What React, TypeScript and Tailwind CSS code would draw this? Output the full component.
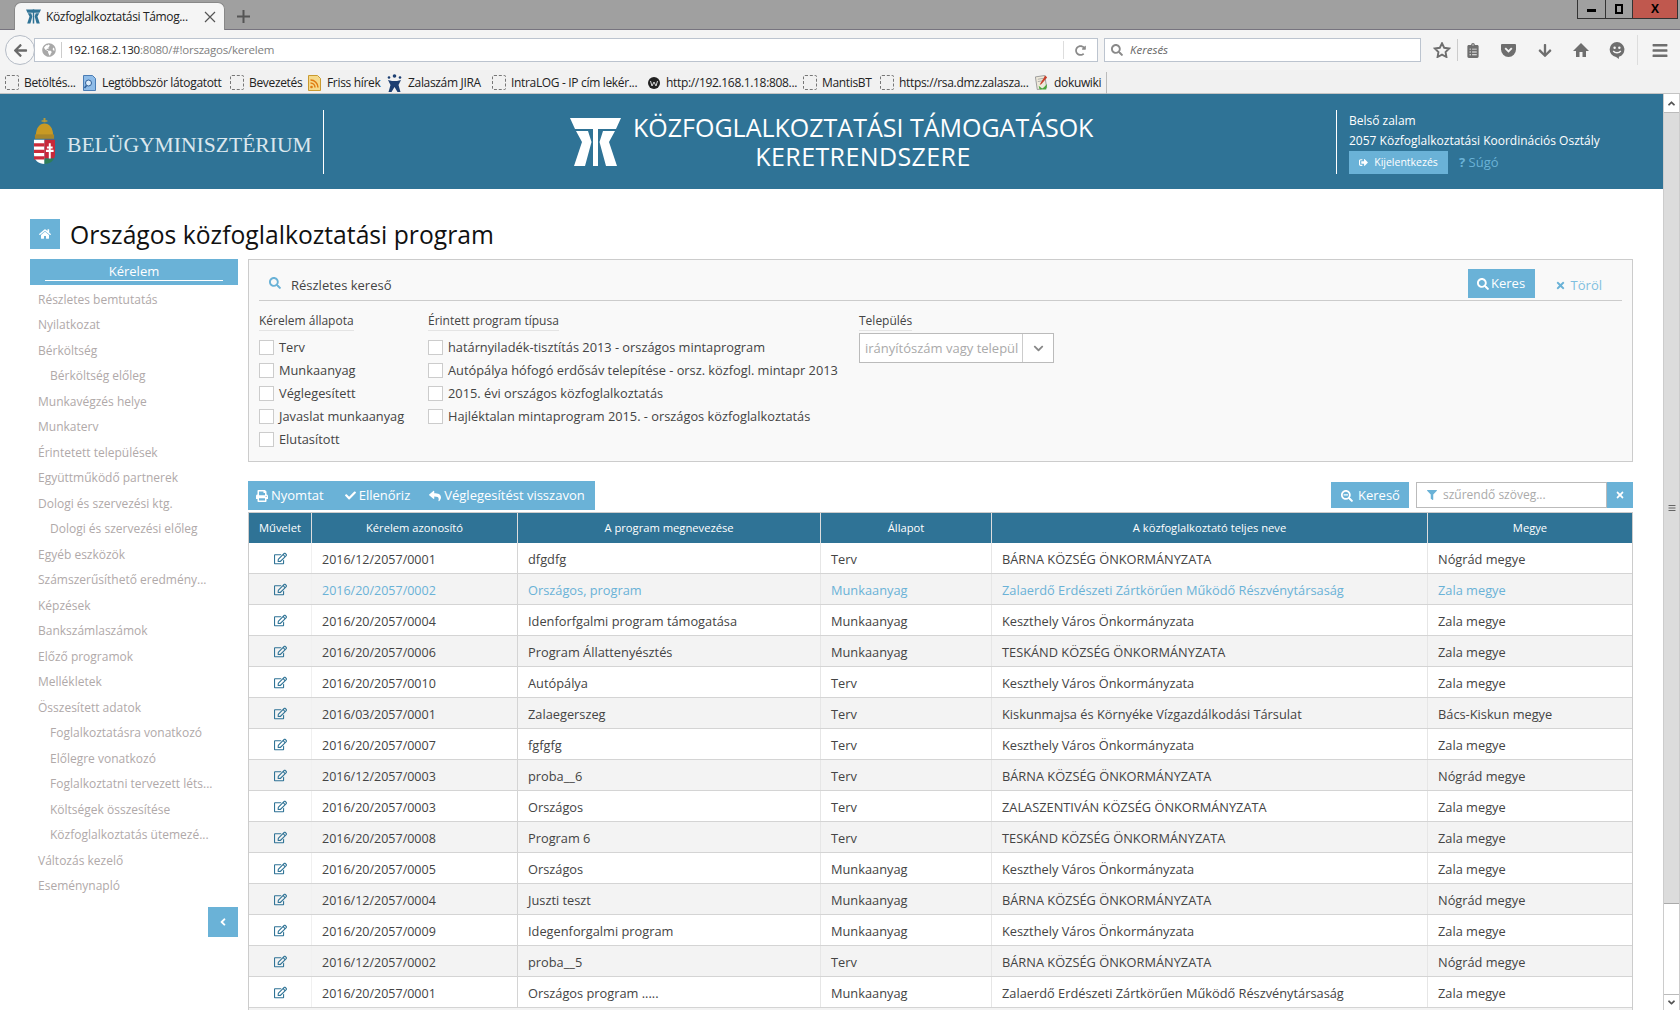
import React from "react";
import {
  FaHome, FaSearch, FaTimes, FaPrint, FaCheck, FaReply, FaFilter, FaSearchMinus, FaRegEdit,
  FaSignOutAlt, FaChevronDown, FaAngleLeft, FaArrowLeft, FaGlobeAmericas, FaRedoAlt,
  FaClipboardList, FaArrowDown, FaBars, FaAngleUp, FaAngleDown,
} from "react-icons/fa";

const sans = "font-['Open_Sans',sans-serif]";

function Logo({ className, color }: { className: string; color: string }) {
  return (
    <svg viewBox="0 0 51 48" className={className} fill={color}>
      <path d="M0 0H51L46 11H5Z" />
      <path d="M23 0H28V48H23Z" />
      <path d="M6 13H18L21.500 24L15 48H4L12 24Z" />
      <path d="M45 13H33L29.500 24L36 48H47L39 24Z" />
    </svg>
  );
}

function Crest() {
  return (
    <svg viewBox="0 0 24 43" preserveAspectRatio="none" className="w-[23px] h-[47px] shrink-0">
      <path d="M11 0h2v4h-2zM9 2h6v1.500H9z" fill="#b79b3a" />
      <path d="M3 16C3 9 7 5 12 5s9 4 9 11z" fill="#c89a24" />
      <rect x="2" y="15" width="20" height="4" fill="#a8862a" />
      <path d="M1 20h11v22c-6 0-11-3-11-9z" fill="#fff" />
      <path d="M1 23h11v3H1zM1 29h11v3H1zM1 35h11v3H1z" fill="#cc2b3a" />
      <path d="M12 20h11v13c0 2-.5 3-1 4H12z" fill="#c8283a" />
      <path d="M12 37h10c-2 3-5 5-10 5z" fill="#2e7d57" />
      <path d="M16.500 23h2v3h2v2h-2v1h3v2h-3v6h-2v-6h-3v-2h3v-1h-2v-2h2z" fill="#fff" />
    </svg>
  );
}

const sidebar: [string, boolean][] = [
  ["Részletes bemtutatás", false], ["Nyilatkozat", false], ["Bérköltség", false], ["Bérköltség előleg", true],
  ["Munkavégzés helye", false], ["Munkaterv", false], ["Érintetett települések", false], ["Együttműködő partnerek", false],
  ["Dologi és szervezési ktg.", false], ["Dologi és szervezési előleg", true], ["Egyéb eszközök", false],
  ["Számszerűsíthető eredmény...", false], ["Képzések", false], ["Bankszámlaszámok", false], ["Előző programok", false],
  ["Mellékletek", false], ["Összesített adatok", false], ["Foglalkoztatásra vonatkozó", true], ["Előlegre vonatkozó", true],
  ["Foglalkoztatni tervezett léts...", true], ["Költségek összesítése", true], ["Közfoglalkoztatás ütemezé...", true],
  ["Változás kezelő", false], ["Eseménynapló", false],
];

const rows = [
  ["2016/12/2057/0001", "dfgdfg", "Terv", "BÁRNA KÖZSÉG ÖNKORMÁNYZATA", "Nógrád megye"],
  ["2016/20/2057/0002", "Országos, program", "Munkaanyag", "Zalaerdő Erdészeti Zártkörűen Működő Részvénytársaság", "Zala megye"],
  ["2016/20/2057/0004", "Idenforfgalmi program támogatása", "Munkaanyag", "Keszthely Város Önkormányzata", "Zala megye"],
  ["2016/20/2057/0006", "Program Állattenyésztés", "Munkaanyag", "TESKÁND KÖZSÉG ÖNKORMÁNYZATA", "Zala megye"],
  ["2016/20/2057/0010", "Autópálya", "Terv", "Keszthely Város Önkormányzata", "Zala megye"],
  ["2016/03/2057/0001", "Zalaegerszeg", "Terv", "Kiskunmajsa és Környéke Vízgazdálkodási Társulat", "Bács-Kiskun megye"],
  ["2016/20/2057/0007", "fgfgfg", "Terv", "Keszthely Város Önkormányzata", "Zala megye"],
  ["2016/12/2057/0003", "proba__6", "Terv", "BÁRNA KÖZSÉG ÖNKORMÁNYZATA", "Nógrád megye"],
  ["2016/20/2057/0003", "Országos", "Terv", "ZALASZENTIVÁN KÖZSÉG ÖNKORMÁNYZATA", "Zala megye"],
  ["2016/20/2057/0008", "Program 6", "Terv", "TESKÁND KÖZSÉG ÖNKORMÁNYZATA", "Zala megye"],
  ["2016/20/2057/0005", "Országos", "Munkaanyag", "Keszthely Város Önkormányzata", "Zala megye"],
  ["2016/12/2057/0004", "Juszti teszt", "Munkaanyag", "BÁRNA KÖZSÉG ÖNKORMÁNYZATA", "Nógrád megye"],
  ["2016/20/2057/0009", "Idegenforgalmi program", "Munkaanyag", "Keszthely Város Önkormányzata", "Zala megye"],
  ["2016/12/2057/0002", "proba__5", "Terv", "BÁRNA KÖZSÉG ÖNKORMÁNYZATA", "Nógrád megye"],
  ["2016/20/2057/0001", "Országos program .....", "Munkaanyag", "Zalaerdő Erdészeti Zártkörűen Működő Részvénytársaság", "Zala megye"],
];

const docIcon = (
  <svg viewBox="0 0 15 16" className="w-[15px] h-[16px]">
    <path d="M1.500 .5h9l3 3v12h-12z" fill="#8fbce8" stroke="#4a7cb4" />
    <circle cx="6.500" cy="8" r="3" fill="#dcecfa" stroke="#2f5f98" />
    <path d="M4.500 10.500L2.500 13" stroke="#2f5f98" strokeWidth="1.500" />
  </svg>
);
const rssIcon = (
  <svg viewBox="0 0 15 16" className="w-[15px] h-[16px]">
    <path d="M1.500 .5h9l3 3v12h-12z" fill="#f5d98a" stroke="#c99a30" />
    <circle cx="4.500" cy="12" r="1.300" fill="#e07a10" />
    <path d="M3.500 8a4.500 4.500 0 0 1 4.500 4.500M3.500 5a7.500 7.500 0 0 1 7.500 7.500" stroke="#e07a10" strokeWidth="1.500" fill="none" />
  </svg>
);
const jiraIcon = (
  <svg viewBox="0 0 15 18" className="w-[15px] h-[18px]" fill="#1d3f72">
    <circle cx="7.500" cy="2" r="1.800" />
    <circle cx="2" cy="3.500" r="1.300" />
    <circle cx="13" cy="3.500" r="1.300" />
    <path d="M1 6l4 1h5l4-1-2.500 5 2 7h-3L7.500 13 4.500 18h-3l2-7z" />
  </svg>
);
const wIcon = (
  <svg viewBox="0 0 14 14" className="w-[14px] h-[14px]">
    <circle cx="7" cy="7" r="6" fill="#222" />
    <path d="M3.500 5l1.500 5 2-4 2 4 1.500-5" stroke="#ddd" strokeWidth="1" fill="none" />
  </svg>
);
const wikiIcon = (
  <svg viewBox="0 0 16 18" className="w-[16px] h-[18px]">
    <path d="M1.500 2.500l10-1.500 2 13-10 2z" fill="#efeadb" stroke="#999" />
    <path d="M4 5l6-1M4 7.500l6-1" stroke="#aaa" />
    <path d="M12 1L7 9l-1 2 2-1 6-7z" fill="#c8402c" />
    <path d="M5 12l4 3 5-5-1 6H6z" fill="#4aa83a" />
  </svg>
);

const bookmarks: [string, number, React.ReactNode][] = [
  ["Betöltés...", 78, null],
  ["Legtöbbször látogatott", 147, docIcon],
  ["Bevezetés", 78, null],
  ["Friss hírek", 79, rssIcon],
  ["Zalaszám JIRA", 105, jiraIcon],
  ["IntraLOG - IP cím lekér...", 155, null],
  ["http://192.168.1.18:808...", 156, wIcon],
  ["MantisBT", 77, null],
  ["https://rsa.dmz.zalasza...", 155, null],
  ["dokuwiki", 72, wikiIcon],
];

const statuses = ["Terv", "Munkaanyag", "Véglegesített", "Javaslat munkaanyag", "Elutasított"];
const programs = [
  "határnyiladék-tisztítás 2013 - országos mintaprogram",
  "Autópálya hófogó erdősáv telepítése - orsz. közfogl. mintapr 2013",
  "2015. évi országos közfoglalkoztatás",
  "Hajléktalan mintaprogram 2015. - országos közfoglalkoztatás",
];

function Check({ label }: { label: string }) {
  return (
    <div className="flex items-center h-[23px] gap-[5px]">
      <span className="w-[15px] h-[15px] bg-white border border-[#ccc] shrink-0" />
      <span className="text-[12.800px] text-[#444] whitespace-nowrap">{label}</span>
    </div>
  );
}

function Legend({ children }: { children: string }) {
  return (
    <div className="h-[23px] mb-[4px]">
      <span className="inline-block mt-[3px] align-top text-[12px] text-[#444] leading-[18px] border-b border-[#e4e4e4]">{children}</span>
    </div>
  );
}

const cols = "grid grid-cols-[63px_206px_303px_171px_436px_204px]";

export default function App() {
  return (
    <div className={`w-[1680px] h-[1010px] overflow-hidden bg-white flex flex-col ${sans}`}>
      {/* tab strip */}
      <div className="h-[30px] bg-[#a0a0a0] border-b border-[#77747f] flex shrink-0">
        <div className="ml-[14px] mt-[2px] w-[211px] h-[28px] bg-[#f5f5f5] rounded-t-[7px] flex items-center pl-[11px] pr-[8px] border-x border-t border-[#888]">
          <Logo className="w-[15px] h-[15px] shrink-0" color="#2f7396" />
          <span className="ml-[5px] text-[12px] text-[#222] whitespace-nowrap tracking-[-0.35px]">Közfoglalkoztatási Támog...</span>
          <svg viewBox="0 0 12 12" className="ml-auto w-[12px] h-[12px]" stroke="#555" strokeWidth="1.200"><path d="M1 1l10 10M11 1L1 11" /></svg>
        </div>
        <svg viewBox="0 0 13 13" className="ml-[12px] mt-[10px] w-[13px] h-[13px]" stroke="#555" strokeWidth="2"><path d="M6.500 0v13M0 6.500h13" /></svg>
        <div className="ml-auto flex h-[19px] border border-[#333] border-t-0 mr-[2px] w-[101px]">
          <div className="w-[28px] border-r border-[#333] flex items-center justify-center">
            <span className="w-[9px] h-[3px] mt-[3px] bg-black block" />
          </div>
          <div className="w-[27px] border-r border-[#333] flex items-center justify-center">
            <span className="w-[8px] h-[10px] border-2 border-black block" />
          </div>
          <div className="flex-1 bg-[#c0584e] flex items-center justify-center text-[12px] font-bold text-black">X</div>
        </div>
      </div>
      {/* nav bar */}
      <div className="h-[40px] bg-[#f4f4f4] flex items-center pl-[5px] shrink-0">
        <div className="w-[30px] h-[30px] rounded-full bg-[#f8f8f8] border border-[#b5bcc6] flex items-center justify-center z-10 shrink-0">
          <FaArrowLeft className="text-[#6a6a6a] text-[15px]" />
        </div>
        <div className="w-[1064px] h-[24px] -ml-[1px] bg-white border border-[#bcc4cf] flex items-center pl-[7px] shrink-0">
          <FaGlobeAmericas className="text-[#a8a8a8] text-[14px]" />
          <span className="ml-[5px] h-[16px] border-l border-[#ccc]" />
          <span className="ml-[6px] text-[11.500px] tracking-[-0.22px] text-[#222]">192.168.2.130<span className="text-[#808080]">:8080/#!orszagos/kerelem</span></span>
          <span className="ml-auto h-[18px] border-l border-[#ddd]" />
          <FaRedoAlt className="text-[#8a8a8a] text-[11px] mx-[11px]" />
        </div>
        <div className="w-[317px] h-[24px] ml-[6px] bg-white border border-[#bcc4cf] flex items-center pl-[6px] shrink-0">
          <FaSearch className="text-[#8a8a8a] text-[12px]" />
          <span className="ml-[7px] text-[11.500px] italic text-[#666]">Keresés</span>
        </div>
        <div className="flex items-center ml-[12px] text-[#6e6e6e]">
          <svg viewBox="0 0 576 512" className="w-[18px] h-[16px]" fill="none" stroke="#6e6e6e" strokeWidth="60"><path d="M288 40l70 145 160 22-116 112 28 160-142-76-142 76 28-160L58 207l160-22z" /></svg>
          <span className="h-[22px] border-l border-[#ccc] ml-[6px]" />
          <FaClipboardList className="text-[15px] w-[18px] ml-[6px]" />
          <svg viewBox="0 0 16 16" className="w-[17px] h-[15px] ml-[18px]" fill="#6e6e6e"><path d="M1 1h14a1 1 0 0 1 1 1v5a8 8 0 0 1-16 0V2a1 1 0 0 1 1-1z" /><path d="M4.500 5.500L8 9l3.500-3.500" stroke="#f4f4f4" strokeWidth="2" fill="none" /></svg>
          <FaArrowDown className="text-[15px] w-[18px] ml-[19px]" />
          <svg viewBox="0 0 16 16" className="w-[16px] h-[16px] ml-[19px]" fill="#6e6e6e"><path d="M8 1L0 9h3v6h3.500v-5h3v5H13V9h3z" /></svg>
          <svg viewBox="0 0 16 18" className="w-[16px] h-[17px] ml-[20px]" fill="#6e6e6e"><path d="M8 0a8 8 0 0 1 2 15.700V18l-3-2.100A8 8 0 0 1 8 0z" /><circle cx="5.500" cy="6" r="1.300" fill="#f4f4f4" /><circle cx="10.500" cy="6" r="1.300" fill="#f4f4f4" /><path d="M4 9.500c2 2.500 6 2.500 8 0" stroke="#f4f4f4" strokeWidth="1.500" fill="none" /></svg>
          <span className="h-[30px] border-l border-[#ddd] ml-[12px]" />
          <FaBars className="text-[17px] w-[18px] ml-[13px]" />
        </div>
      </div>
      {/* bookmarks */}
      <div className="h-[24px] bg-[#f1f1f1] border-b border-[#c4c4c4] flex items-center pl-[4px] pt-[2px] shrink-0">
        {bookmarks.map(([t, w, ic]) => (
          <div key={t} className="flex items-center shrink-0" style={{ width: w }}>
            <span className={`h-[18px] flex items-center justify-center shrink-0 ${t === "Zalaszám JIRA" ? "w-[17px]" : "w-[15px]"}`}>
              {ic ?? <span className="w-[14px] h-[15px] border border-dashed border-[#777] rounded-[2px] block" />}
            </span>
            <span className="ml-[5px] text-[12px] text-[#222] whitespace-nowrap tracking-[-0.33px]">{t}</span>
          </div>
        ))}
        <span className="h-[22px] border-l border-[#bbb]" />
      </div>
      {/* page */}
      <div className="flex flex-1 min-h-0">
        <div className="w-[1663px] min-w-0 flex flex-col overflow-hidden">
          <header className="h-[95px] shrink-0 bg-[#2f7396] flex items-center text-white">
            <div className="ml-[33px] flex items-center w-[291px] h-[64px] border-r border-white">
              <Crest />
              <span className="ml-[11px] mt-[7px] font-['Liberation_Serif',serif] text-[21.600px] text-[#dbe7ee] whitespace-nowrap">BELÜGYMINISZTÉRIUM</span>
            </div>
            <div className="ml-[246px] flex items-center">
              <Logo className="w-[51px] h-[48px] shrink-0" color="#ffffff" />
              <div className="ml-[12px] w-[460px] text-center text-[25px] leading-[29px] whitespace-nowrap">
                <div>KÖZFOGLALKOZTATÁSI TÁMOGATÁSOK</div>
                <div className="tracking-[0.4px]">KERETRENDSZERE</div>
              </div>
            </div>
            <div className="ml-[243px] h-[64px] border-l border-white pl-[12px] pt-[1px] text-[12px] leading-[20px] whitespace-nowrap">
              <div>Belső zalam</div>
              <div>2057 Közfoglalkoztatási Koordinációs Osztály</div>
              <div className="flex items-center">
                <div className="w-[99px] h-[23px] bg-[#6ab2d7] flex items-center justify-center text-[10.500px]">
                  <FaSignOutAlt className="text-[9px] mr-[6px]" /> Kijelentkezés
                </div>
                <span className="ml-[11px] text-[#6ab2d7] text-[13px]"><b>?</b> Súgó</span>
              </div>
            </div>
          </header>
          <div className="flex-1 min-h-0 pl-[30px] pr-[30px] pt-[30px]">
            <div className="flex items-center h-[30px]">
              <div className="w-[30px] h-[30px] bg-[#6ab2d7] flex items-center justify-center">
                <FaHome className="text-white text-[12px]" />
              </div>
              <h1 className="ml-[10px] pt-[2px] text-[24.700px] text-[#111] whitespace-nowrap">Országos közfoglalkoztatási program</h1>
            </div>
            <div className="flex mt-[10px]">
              {/* sidebar */}
              <aside className="w-[208px] shrink-0">
                <div className="h-[26px] bg-[#6ab2d7] px-[15px]">
                  <div className="h-[22px] border-b border-white text-white text-[13px] leading-[24px] text-center">Kérelem</div>
                </div>
                <div className="pt-[1.500px]">
                  {sidebar.map(([t, sub]) => (
                    <div key={t} className={`h-[25.500px] leading-[25.500px] text-[12px] text-[#b0a9a9] whitespace-nowrap ${sub ? "pl-[20px]" : "pl-[8px]"}`}>{t}</div>
                  ))}
                </div>
                <div className="flex justify-end mt-[8.500px]">
                  <div className="w-[30px] h-[30px] bg-[#6ab2d7] flex items-center justify-center">
                    <FaAngleLeft className="text-white text-[12px]" />
                  </div>
                </div>
              </aside>
              {/* main */}
              <main className="ml-[10px] w-[1385px] shrink-0">
                <section className="h-[203px] bg-[#f9f9f9] border border-[#ccc] px-[10px] pt-[9px]">
                  <div className="h-[32px] border-b border-[#ccc] flex items-start">
                    <FaSearch className="ml-[10px] mt-[8px] text-[#6ab2d7] text-[12px]" />
                    <span className="ml-[10px] mt-[7px] text-[13px] text-[#444]">Részletes kereső</span>
                    <div className="ml-auto w-[67px] h-[29px] bg-[#6ab2d7] text-white text-[13px] flex items-center justify-center gap-[2px]">
                      <FaSearch className="text-[12px]" /> Keres
                    </div>
                    <div className="ml-[20px] mr-[20px] mt-[7px] text-[13px] text-[#7fbfdf] flex items-center gap-[5px]">
                      <FaTimes className="text-[11px] text-[#6ab2d7]" /> Töröl
                    </div>
                  </div>
                  <div className="flex mt-[8px]">
                    <div className="w-[169px]">
                      <Legend>Kérelem állapota</Legend>
                      {statuses.map((s) => <Check key={s} label={s} />)}
                    </div>
                    <div className="w-[431px]">
                      <Legend>Érintett program típusa</Legend>
                      {programs.map((s) => <Check key={s} label={s} />)}
                    </div>
                    <div>
                      <Legend>Település</Legend>
                      <div className="w-[195px] h-[30px] -mt-[3px] bg-white border border-[#bbb] flex">
                        <span className="flex-1 pl-[5px] text-[13px] leading-[28px] text-[#aaa] overflow-hidden whitespace-nowrap">irányítószám vagy települ</span>
                        <span className="w-[31px] border-l border-[#ccc] flex items-center justify-center">
                          <FaChevronDown className="text-[#888] text-[11px]" />
                        </span>
                      </div>
                    </div>
                  </div>
                </section>
                <div className="flex items-start mt-[19px] h-[31px]">
                  <div className="w-[347px] h-[29px] bg-[#6ab2d7] text-white text-[13px] flex items-center pl-[8px] whitespace-nowrap">
                    <FaPrint className="text-[12px] mr-[3px]" /> Nyomtat
                    <FaCheck className="text-[11px] ml-[21px] mr-[3px]" /> Ellenőriz
                    <FaReply className="text-[12px] ml-[19px] mr-[3px]" /> Véglegesítést visszavon
                  </div>
                  <div className="ml-auto mt-[1px] w-[78px] h-[26px] pt-[1px] pl-[1px] bg-[#6ab2d7] text-white text-[13px] flex items-center justify-center gap-[5px]">
                    <FaSearchMinus className="text-[12px]" /> Kereső
                  </div>
                  <div className="ml-[7px] mt-[1px] w-[191px] h-[26px] bg-white border border-[#bbb] flex items-center pl-[10px]">
                    <FaFilter className="text-[#6ab2d7] text-[10px]" />
                    <span className="ml-[6px] text-[12px] text-[#aaa]">szűrendő szöveg...</span>
                  </div>
                  <div className="mt-[1px] w-[26px] h-[26px] bg-[#6ab2d7] flex items-center justify-center">
                    <FaTimes className="text-white text-[10px]" />
                  </div>
                </div>
                <div className="border-x border-[#ccc]">
                  <div className={`${cols} h-[31px] bg-[#2f7396] text-white text-[11.200px] border-t border-[#ccc]`}>
                    {["Művelet", "Kérelem azonosító", "A program megnevezése", "Állapot", "A közfoglalkoztató teljes neve", "Megye"].map((h, i) => (
                      <div key={h} className={`flex items-center justify-center pt-[1px] ${i < 5 ? "border-r border-[#ddd]" : ""}`}>{h}</div>
                    ))}
                  </div>
                  {rows.map((r, i) => (
                    <div key={r[0]} className={`${cols} h-[31px] border-b border-[#d4d4d4] text-[12.800px] ${i === 1 ? "text-[#6ab2d7]" : "text-[#444]"} ${i % 2 ? "bg-[#f3f3f3]" : "bg-white"}`}>
                      <div className="flex items-center justify-center border-r border-[#f0f0f0]">
                        <FaRegEdit className="text-[#2f7396] text-[13px]" />
                      </div>
                      {r.map((c, j) => (
                        <div key={j} className={`pl-[10px] flex items-center whitespace-nowrap ${j === 0 ? "pt-[4px] border-r border-[#d4d4d4] text-[12.500px]" : "pt-[3px]"} ${j > 0 && j < 4 ? "border-r border-[#e6e6e6]" : ""}`}>{c}</div>
                      ))}
                    </div>
                  ))}
                  <div className="h-[31px] bg-[#f3f3f3]" />
                </div>
              </main>
            </div>
          </div>
        </div>
        {/* scrollbar */}
        <div className="w-[17px] shrink-0 bg-white border-x border-[#ccc] flex flex-col">
          <div className="h-[19px] bg-white border-b border-[#bbb] flex items-center justify-center">
            <FaAngleUp className="text-[#555] text-[11px]" />
          </div>
          <div className="h-[791px] bg-[#dcdcdc] border-b border-[#aaa] flex items-center justify-center">
            <FaBars className="text-[#666] text-[8px]" />
          </div>
          <div className="flex-1" />
          <div className="h-[16px] border-t border-[#bbb] flex items-center justify-center">
            <FaAngleDown className="text-[#555] text-[11px]" />
          </div>
        </div>
      </div>
    </div>
  );
}
